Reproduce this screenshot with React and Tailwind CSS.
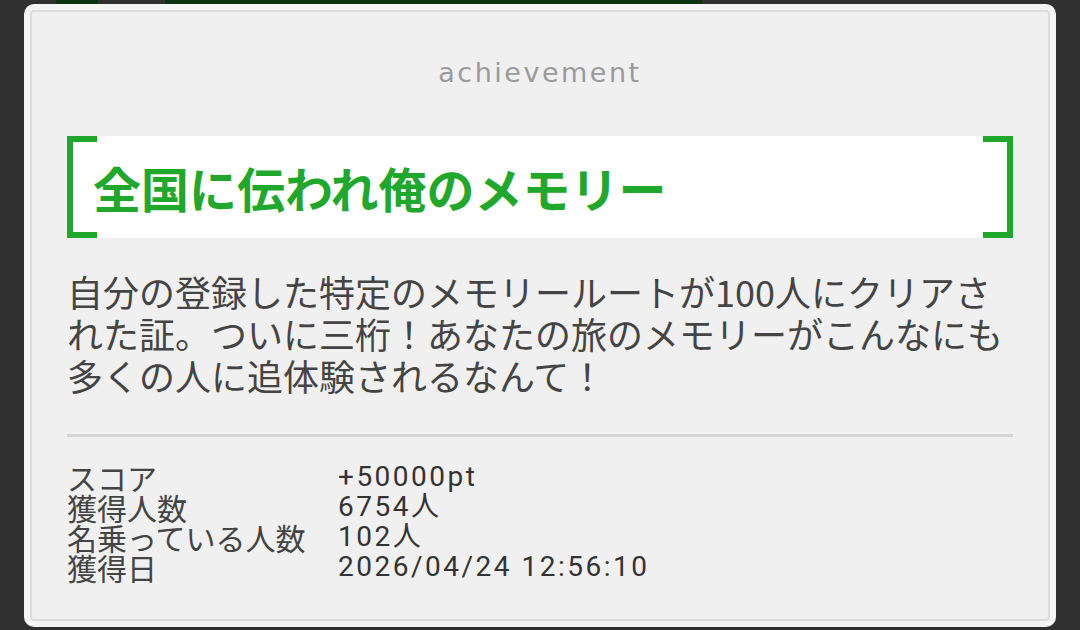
export default function App() {
  const jp = { fontFamily: '"Noto Sans CJK JP", "Noto Sans", sans-serif' };
  const num = { fontFamily: 'Roboto, "Noto Sans CJK JP", sans-serif' };
  const rows = [
    ['スコア', '+50000pt'],
    ['獲得人数', '6754人'],
    ['名乗っている人数', '102人'],
    ['獲得日', '2026/04/24 12:56:10'],
  ];
  return (
    <div className="w-[1080px] h-[630px] bg-[#303030] overflow-hidden flex flex-col">
      <div className="h-[4px] flex shrink-0">
        <div className="ml-[56px] w-[42px] h-full bg-[#0c330f]" />
        <div className="ml-[67px] w-[537px] h-full bg-[#0c330f]" />
      </div>
      <div className="ml-[24px] w-[1032px] h-[623px] rounded-[10px] bg-[#f5f5f5] p-[6px] shrink-0">
        <div className="w-full h-full rounded-[4px] border-[2px] border-[#dcdcdc] bg-[#f0f0f0] px-[35px] pt-[47px]">
          <div
            className="text-center text-[27px] leading-[27px] tracking-[2.5px] text-[#9a9a9a]"
            style={{ fontFamily: '"DejaVu Sans", sans-serif' }}
          >
            achievement
          </div>
          <div className="relative mt-[50px] h-[102px] bg-white flex items-center pl-[26px]">
            <div className="absolute left-0 top-0 w-[30px] h-full border-l-[6px] border-y-[6px] border-[#1fa82b]" />
            <div className="absolute right-0 top-0 w-[30px] h-full border-r-[6px] border-y-[6px] border-[#1fa82b]" />
            <span className="text-[48px] leading-none font-bold text-[#1fa82b]" style={jp}>
              全国に伝われ俺のメモリー
            </span>
          </div>
          <p className="mt-[32px] text-[36px] leading-[42px] text-[#444444] whitespace-nowrap" style={jp}>
            自分の登録した特定のメモリールートが100人にクリアさ
            <br />
            れた証。ついに三桁！あなたの旅のメモリーがこんなにも
            <br />
            多くの人に追体験されるなんて！
          </p>
          <div className="mt-[38px] h-[3px] bg-[#d6d6d6]" />
          <div className="mt-[25px] flex flex-col">
            {rows.map(([k, v]) => (
              <div key={k} className="flex h-[30px] items-center">
                <div className="w-[271px] text-[30px] leading-[30px] text-[#444444] whitespace-nowrap" style={jp}>
                  {k}
                </div>
                <div className="text-[28px] leading-[30px] tracking-[2.5px] text-[#333333] whitespace-nowrap" style={num}>
                  {v}
                </div>
              </div>
            ))}
          </div>
        </div>
      </div>
    </div>
  );
}
